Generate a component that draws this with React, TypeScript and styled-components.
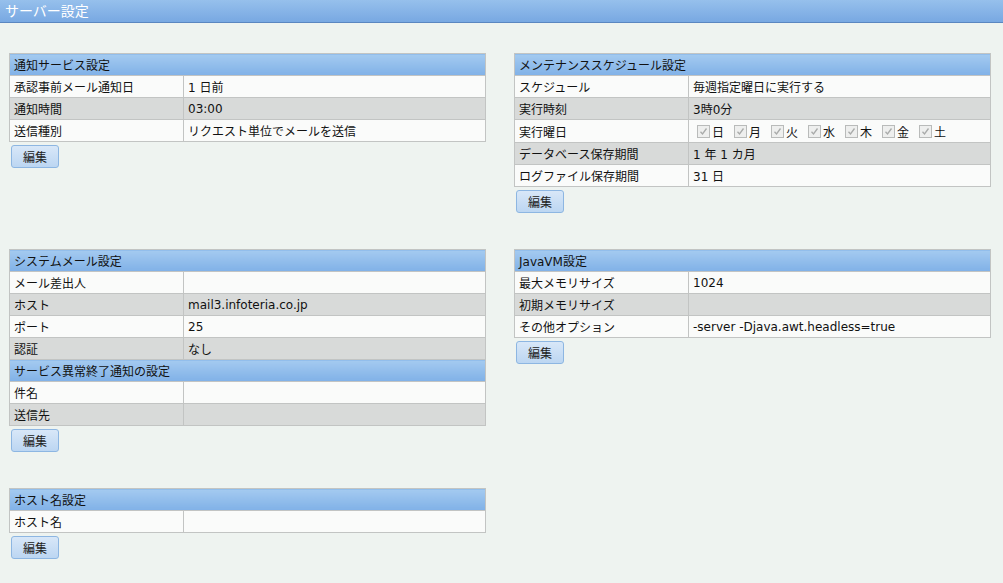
import React from "react";
import styled, { createGlobalStyle } from "styled-components";

const GlobalStyle = createGlobalStyle`
  html, body {
    margin: 0;
    padding: 0;
    background: #eef3f0;
  }
  body {
    font-family: "DejaVu Sans", "Noto Sans CJK JP", sans-serif;
    font-size: 12px;
    color: #111;
  }
`;

const TitleBar = styled.div`
  height: 22px;
  line-height: 22px;
  padding-left: 5px;
  color: #fff;
  font-size: 14px;
  background: linear-gradient(#96c0ec, #78a8e2);
  border-bottom: 1px solid #5a86c0;
`;

const Content = styled.div`
  display: grid;
  grid-template-columns: 477px 477px;
  column-gap: 28px;
  row-gap: 36px;
  align-items: start;
  padding: 30px 0 0 9px;
`;

const Section = styled.div``;

const Table = styled.table`
  width: 100%;
  border-collapse: collapse;
  table-layout: fixed;
  border: 1px solid #c2c4c3;
`;

const LabelCol = styled.col`
  width: 174px;
`;

const HeadCell = styled.th`
  height: 21px;
  padding: 0 4px;
  text-align: left;
  font-weight: normal;
  color: #111;
  background: linear-gradient(#a4caf0, #80b1e7);
  border: 1px solid #c2c4c3;
`;

const Row = styled.tr<{ $shade?: boolean }>`
  background: ${(p) => (p.$shade ? "#d8dad9" : "#fafbfa")};
`;

const Cell = styled.td`
  height: 21px;
  padding: 0 4px;
  border: 1px solid #c2c4c3;
  white-space: nowrap;
`;

const EditButton = styled.button`
  display: block;
  margin: 3px 0 0 2px;
  width: 48px;
  height: 23px;
  padding: 0;
  font-family: inherit;
  font-size: 12px;
  color: #222;
  border: 1px solid #8db6e2;
  border-radius: 3px;
  background: linear-gradient(#d8e7f8, #bcd6f2);
`;

const Days = styled.div`
  display: flex;
  align-items: center;
  gap: 10px;
  padding-left: 4px;
  height: 22px;
`;

const Day = styled.span`
  display: inline-flex;
  align-items: center;
  gap: 2px;
`;

const Box = styled.span`
  display: inline-flex;
  align-items: center;
  justify-content: center;
  width: 11px;
  height: 11px;
  border: 1px solid #b9bbba;
  background: #eeefee;
`;

const Check = () => (
  <svg width="9" height="9" viewBox="0 0 9 9">
    <path d="M1.5 4.8 L3.5 7 L7.5 1.5" fill="none" stroke="#a9abaa" strokeWidth="1.3" />
  </svg>
);

type Item = [string, React.ReactNode];

const DataRows = ({ rows }: { rows: Item[] }) => (
  <>
    {rows.map(([k, v], i) => (
      <Row key={k} $shade={i % 2 === 1}>
        <Cell>{k}</Cell>
        <Cell>{v}</Cell>
      </Row>
    ))}
  </>
);

const Block = ({ groups }: { groups: { title: string; rows: Item[] }[] }) => (
  <Section>
    <Table>
      <colgroup>
        <LabelCol />
        <col />
      </colgroup>
      <tbody>
        {groups.map((g) => (
          <React.Fragment key={g.title}>
            <tr>
              <HeadCell colSpan={2}>{g.title}</HeadCell>
            </tr>
            <DataRows rows={g.rows} />
          </React.Fragment>
        ))}
      </tbody>
    </Table>
    <EditButton>編集</EditButton>
  </Section>
);

const days = ["日", "月", "火", "水", "木", "金", "土"];

const DayChecks = () => (
  <Days>
    {days.map((d) => (
      <Day key={d}>
        <Box>
          <Check />
        </Box>
        {d}
      </Day>
    ))}
  </Days>
);

const App = () => {
  return (
    <>
      <GlobalStyle />
      <TitleBar>サーバー設定</TitleBar>
      <Content>
        <Block
          groups={[
            {
              title: "通知サービス設定",
              rows: [
                ["承認事前メール通知日", "1 日前"],
                ["通知時間", "03:00"],
                ["送信種別", "リクエスト単位でメールを送信"],
              ],
            },
          ]}
        />
        <Block
          groups={[
            {
              title: "メンテナンススケジュール設定",
              rows: [
                ["スケジュール", "毎週指定曜日に実行する"],
                ["実行時刻", "3時0分"],
                ["実行曜日", <DayChecks />],
                ["データベース保存期間", "1 年 1 カ月"],
                ["ログファイル保存期間", "31 日"],
              ],
            },
          ]}
        />
        <Block
          groups={[
            {
              title: "システムメール設定",
              rows: [
                ["メール差出人", ""],
                ["ホスト", "mail3.infoteria.co.jp"],
                ["ポート", "25"],
                ["認証", "なし"],
              ],
            },
            {
              title: "サービス異常終了通知の設定",
              rows: [
                ["件名", ""],
                ["送信先", ""],
              ],
            },
          ]}
        />
        <Block
          groups={[
            {
              title: "JavaVM設定",
              rows: [
                ["最大メモリサイズ", "1024"],
                ["初期メモリサイズ", ""],
                ["その他オプション", "-server -Djava.awt.headless=true"],
              ],
            },
          ]}
        />
        <Block
          groups={[
            {
              title: "ホスト名設定",
              rows: [["ホスト名", ""]],
            },
          ]}
        />
      </Content>
    </>
  );
};

export default App;
